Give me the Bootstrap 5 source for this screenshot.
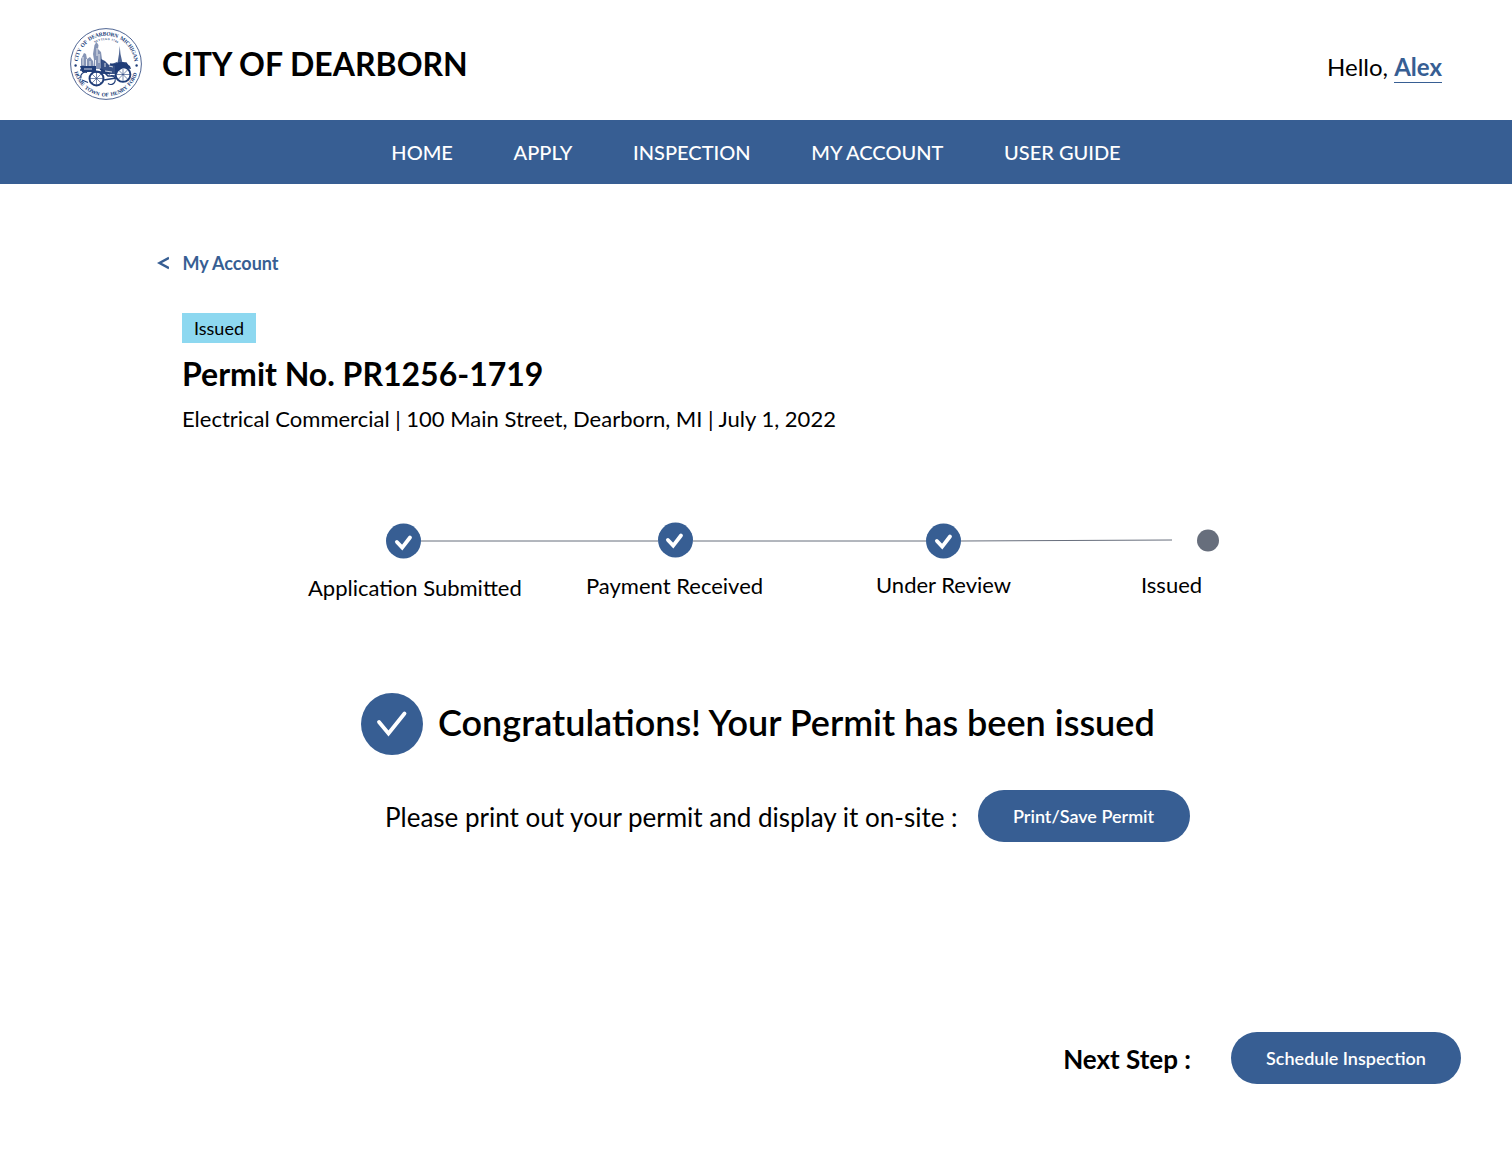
<!DOCTYPE html>
<html lang="en">
<head>
<meta charset="utf-8">
<meta name="viewport" content="width=device-width, initial-scale=1">
<title>City of Dearborn – Permit</title>
<link href="https://cdn.jsdelivr.net/npm/bootstrap@5.3.0/dist/css/bootstrap.min.css" rel="stylesheet">
<style>
:root{--brand:#375e93}
body{font-family:Lato,sans-serif;color:#000;background:#fff;min-height:1160px}
.top-bar{height:120px;padding:8px 70px 0}
.seal{width:72px;height:72px;margin-right:20px}
.city-name{font-size:32px;font-weight:700;line-height:40px}
.greeting{font-size:24px;line-height:30px;margin-top:6px}
.greeting a{color:var(--brand);font-weight:700;border-bottom:1px solid var(--brand);display:inline-block;line-height:30px}
.main-nav{height:64px;background:var(--brand)}
.main-nav .nav{gap:60.7px}
.main-nav .nav-link{color:#fff;font-size:20px;font-weight:500;line-height:24px;padding:0}
.crumb{color:var(--brand);font-size:18px;font-weight:700;line-height:24px;margin:67px 0 0 157px}
.crumb svg{margin-right:13.4px}
.permit-head{margin:38px 0 0 182px}
.status-tag{background:#8dd8f0;font-size:18px;line-height:30px;height:30px;width:74px}
.permit-no{font-size:32px;font-weight:700;line-height:40px;margin:11px 0 0}
.permit-info{font-size:22px;line-height:28px;margin:11px 0 0}
.tracker{margin-top:82px;margin-left:300px;width:940px}
.rail{display:block;width:940px;height:50px}
.step-labels{font-size:22px;line-height:28px}
.step-a{margin:9px 0 0 8px;width:278px}
.step-b{margin-top:7px;width:290px}
.step-c{margin-top:6px;width:265px}
.step-d{margin-top:6px}
.congrats{margin:91px 0 0 361px}
.congrats h2{font-size:36px;font-weight:600;line-height:44px;margin:0 0 4px 15px}
.print-row{margin:35px 0 0 385px;font-size:26px;line-height:32px}
.print-row span{margin-top:1px}
.print-row .pill{margin-left:20px}
.pill{background:var(--brand);color:#fff;border:0;border-radius:26px;height:52px;font-size:18px;font-weight:600;padding:0}
.pill:hover{background:#2c4d7a;color:#fff}
.pill-print{width:212px}
.pill-next{width:230px}
.next-row{margin:190px 51px 0 0}
.next-row span{font-size:26px;font-weight:700;line-height:32px;margin:2px 40px 0 0}
</style>
</head>
<body>
<header class="top-bar d-flex align-items-center">
  <svg class="seal" viewBox="0 0 72 72" fill="none">
    <defs>
      <path id="arcTop" d="M7.770 38A28.300 28.300 0 1 1 64.230 38"/>
      <path id="arcBottom" d="M4.200 43A32.600 32.600 0 0 0 67.800 43"/>
      <path id="arcInner" d="M14 34A22 22 0 0 1 58 34"/>
    </defs>
    <circle cx="36" cy="36" r="35.4" stroke="#3b5487" stroke-width=".9"/>
    <g fill="#203d78" font-family="Liberation Serif, serif" font-weight="700">
      <text font-size="5.500" word-spacing="1.200"><textPath href="#arcTop" startOffset="4.500" textLength="84">CITY OF DEARBORN MICHIGAN</textPath></text>
      <text font-size="5.400" word-spacing="1.200"><textPath href="#arcBottom" startOffset="1" textLength="84">HOME TOWN OF HENRY FORD</textPath></text>
      <text font-size="2.900"><textPath href="#arcInner" startOffset="22.500" textLength="24">SETTLED 1786</textPath></text>
    </g>
    <g fill="#203d78"><circle cx="5.600" cy="37.500" r="1.200"/><circle cx="66.600" cy="37.500" r="1.200"/></g>
    <g stroke="#203d78">
      <circle cx="26.500" cy="50.500" r="7" stroke-width="1.900"/>
      <circle cx="53" cy="46.500" r="7.400" stroke-width="1.900"/>
      <path stroke-width=".6" d="M19.500 50.500h14M26.500 43.500v14M21.500 45.500l10 10M31.500 45.500l-10 10M46 46.500h15M53 39v15M48 41.500l10 10M58 41.500l-10 10"/>
      <path stroke-width="1.200" d="M11 50a4.500 4.500 0 0 1 6-5.500M12 52l6 2.500M38 55.500a4.500 4.500 0 1 0 3-8"/>
      <path stroke-width="1.700" d="M10 42h12l4 2h8l4 4h8M30 41l10 5M34 52l12-2M40 36l6 1 3-2h7l2 3"/>
    </g>
    <g fill="#203d78">
      <path d="M47.500 35l1.500-9 .7-8 .8 8 2 9z" fill-opacity=".8"/>
      <path d="M24.500 17l2-3 2 3-.5 4 3 3 1 7-1 10h-8l1-9-1-6z" fill-opacity=".55"/>
      <path d="M31 31l4 2 4 4 8-3 4 4-4 8H31z" fill-opacity=".9"/>
      <path d="M11 31l3-6 2 1 1 5 3-2 3 4v8H11z" fill-opacity=".55"/>
      <path d="M10 38h16v6H12zM45 36l8-2 7 4 1 3-8-1-8 5z"/>
    </g>
    <path d="M13 29v8M16.500 31v7M20 33v5M27 20v8M29 26v9M25.500 32v6M35 35v4M39 38l4 1M35 43l7 1M14 41h8" stroke="#fff" stroke-width=".8"/>
  </svg>
  <div class="city-name">CITY OF DEARBORN</div>
  <div class="greeting ms-auto">Hello, <a href="#" class="text-decoration-none">Alex</a></div>
</header>
<nav class="main-nav d-flex align-items-center justify-content-center">
  <ul class="nav">
    <li class="nav-item"><a class="nav-link" href="#">HOME</a></li>
    <li class="nav-item"><a class="nav-link" href="#">APPLY</a></li>
    <li class="nav-item"><a class="nav-link" href="#">INSPECTION</a></li>
    <li class="nav-item"><a class="nav-link" href="#">MY ACCOUNT</a></li>
    <li class="nav-item"><a class="nav-link" href="#">USER GUIDE</a></li>
  </ul>
</nav>
<main>
  <a href="#" class="crumb d-flex align-items-center text-decoration-none">
    <svg width="12" height="14" viewBox="0 0 12 14" fill="none" stroke="#375e93" stroke-width="2.4"><path d="M12 1.800L2.500 7l9.500 5.200"/></svg>
    <span>My Account</span>
  </a>
  <section class="permit-head">
    <div class="status-tag text-center">Issued</div>
    <h1 class="permit-no">Permit No. PR1256-1719</h1>
    <p class="permit-info">Electrical Commercial | 100 Main Street, Dearborn, MI | July 1, 2022</p>
  </section>
  <section class="tracker">
    <svg class="rail" viewBox="0 0 940 50" fill="none">
      <path d="M121 26H358M393 26H626M661 26L872 25" stroke="#676e7c"/>
      <g fill="#375e93"><circle cx="103.500" cy="26" r="17.500"/><circle cx="375.500" cy="25" r="17.500"/><circle cx="643.500" cy="26" r="17.500"/></g>
      <circle cx="908" cy="25.500" r="11" fill="#676e7c"/>
      <g stroke="#fff" stroke-width="3.800" stroke-linecap="round">
        <path d="M96.900 27l5.300 5.600L110 22.500"/><path d="M367.900 25l5.300 5.600L381 20.500"/><path d="M636.900 26l5.300 5.600L650 21.500"/>
      </g>
    </svg>
    <div class="step-labels d-flex">
      <div class="step-a">Application Submitted</div>
      <div class="step-b">Payment Received</div>
      <div class="step-c">Under Review</div>
      <div class="step-d">Issued</div>
    </div>
  </section>
  <section class="congrats d-flex align-items-center">
    <svg width="62" height="62" viewBox="0 0 62 62" fill="none"><circle cx="31" cy="31" r="31" fill="#375e93"/><path d="M18 29l9.500 11.500L43.500 20.500" stroke="#fff" stroke-width="3.800" stroke-linecap="round"/></svg>
    <h2>Congratulations! Your Permit has been issued</h2>
  </section>
  <section class="print-row d-flex align-items-center">
    <span>Please print out your permit and display it on-site :</span>
    <button class="btn pill pill-print">Print/Save Permit</button>
  </section>
  <section class="next-row d-flex align-items-center justify-content-end">
    <span>Next Step :</span>
    <button class="btn pill pill-next">Schedule Inspection</button>
  </section>
</main>
<script src="https://cdn.jsdelivr.net/npm/bootstrap@5.3.0/dist/js/bootstrap.bundle.min.js"></script>
</body>
</html>
